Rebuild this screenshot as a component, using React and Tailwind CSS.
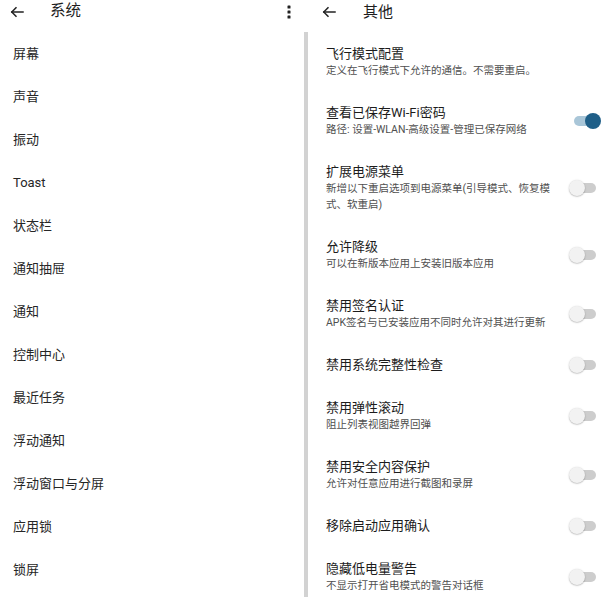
import React from "react";

const leftItems = [
  "屏幕",
  "声音",
  "振动",
  "Toast",
  "状态栏",
  "通知抽屉",
  "通知",
  "控制中心",
  "最近任务",
  "浮动通知",
  "浮动窗口与分屏",
  "应用锁",
  "锁屏",
];

const rightItems = [
  { t: "飞行模式配置", s: "定义在飞行模式下允许的通信。不需要重启。", toggle: null },
  { t: "查看已保存Wi-Fi密码", s: "路径: 设置-WLAN-高级设置-管理已保存网络", toggle: true },
  { t: "扩展电源菜单", s: "新增以下重启选项到电源菜单(引导模式、恢复模式、软重启)", toggle: false },
  { t: "允许降级", s: "可以在新版本应用上安装旧版本应用", toggle: false },
  { t: "禁用签名认证", s: "APK签名与已安装应用不同时允许对其进行更新", toggle: false },
  { t: "禁用系统完整性检查", s: null, toggle: false },
  { t: "禁用弹性滚动", s: "阻止列表视图越界回弹", toggle: false },
  { t: "禁用安全内容保护", s: "允许对任意应用进行截图和录屏", toggle: false },
  { t: "移除启动应用确认", s: null, toggle: false },
  { t: "隐藏低电量警告", s: "不显示打开省电模式的警告对话框", toggle: false },
];

function BackArrow() {
  return (
    <svg width="14" height="14" viewBox="0 0 14 14" fill="none" stroke="#222" strokeWidth="1.5" strokeLinecap="square">
      <path d="M13 7H1.8" />
      <path d="M6.5 2.2L1.8 7l4.7 4.8" strokeLinecap="butt" />
    </svg>
  );
}

function Dots() {
  return (
    <svg width="4" height="16" viewBox="0 0 4 16" fill="#222">
      <rect x="0.5" y="1.5" width="3" height="3" rx="0.6" />
      <rect x="0.5" y="6.5" width="3" height="3" rx="0.6" />
      <rect x="0.5" y="11.5" width="3" height="3" rx="0.6" />
    </svg>
  );
}

function Toggle({ on }) {
  return (
    <div className="relative w-[32px] h-[16px] shrink-0">
      <div
        className={
          "absolute left-[5px] right-[5px] top-[3px] h-[10px] rounded-full " +
          (on ? "bg-[#a9c6d8]" : "bg-[#cdcdcd]")
        }
      />
      {on ? (
        <div className="absolute right-0 top-0 w-[16px] h-[16px] rounded-full bg-[#1f5f88]" />
      ) : (
        <div className="absolute left-0 top-0 w-[16px] h-[16px] rounded-full bg-[#f2f2f2] shadow-[0_0.5px_1.5px_rgba(0,0,0,0.35)]" />
      )}
    </div>
  );
}

export default function App() {
  return (
    <div className="w-[609px] h-[597px] overflow-hidden bg-white flex items-start font-['Roboto','Noto_Sans_CJK_SC',sans-serif]">
      {/* Left panel */}
      <div className="w-[304px] shrink-0 flex flex-col">
        <div className="h-[24px] shrink-0 flex items-center pl-[10px] pr-[13px]">
          <BackArrow />
          <span className="ml-[26px] text-[15.5px] text-[#1e1e1e] leading-none">系统</span>
          <div className="ml-auto flex items-center">
            <Dots />
          </div>
        </div>
        <div className="mt-[8px] shrink-0 flex flex-col">
          {leftItems.map((it) => (
            <div key={it} className="h-[43px] shrink-0 flex items-center pl-[13px] text-[13px] text-[#262626]">
              {it}
            </div>
          ))}
        </div>
      </div>

      {/* Right panel */}
      <div className="flex-1 flex flex-col min-w-0">
        <div className="h-[24px] shrink-0 flex items-center pl-[18px]">
          <BackArrow />
          <span className="ml-[27px] text-[15px] text-[#1e1e1e] leading-none">其他</span>
        </div>
        <div className="mt-[8px] shrink-0 border-l-[4px] border-[#d2d2d2] flex flex-col">
          {rightItems.map((it) => (
            <div key={it.t} className="shrink-0 flex items-center py-[12px] pl-[18px] pr-[8px]">
              <div className="flex-1 mr-[13px] min-w-0">
                <div className="text-[13px] leading-[19px] text-[#1c1c1c]">{it.t}</div>
                {it.s && (
                  <div className="text-[10.5px] leading-[16px] text-[#4f4f4f]">{it.s}</div>
                )}
              </div>
              {it.toggle !== null && <Toggle on={it.toggle} />}
            </div>
          ))}
        </div>
      </div>
    </div>
  );
}
